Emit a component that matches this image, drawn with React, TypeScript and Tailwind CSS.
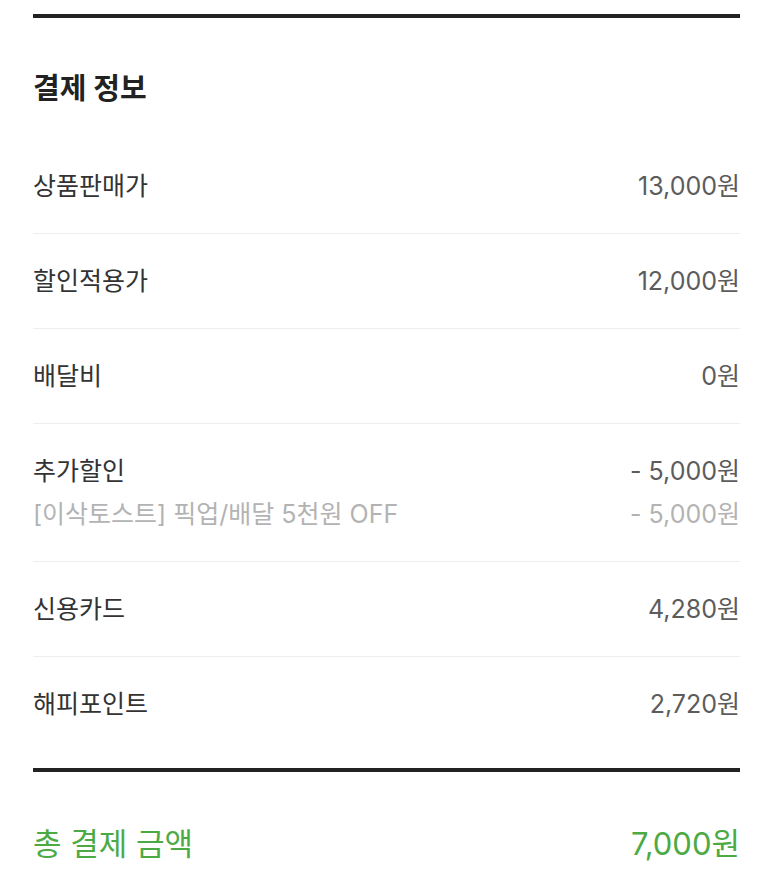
import React from 'react';

type Row = { label: string; value: string; sub?: { label: string; value: string } };

const rows: Row[] = [
  { label: '상품판매가', value: '13,000원' },
  { label: '할인적용가', value: '12,000원' },
  { label: '배달비', value: '0원' },
  {
    label: '추가할인',
    value: '- 5,000원',
    sub: { label: '[이삭토스트] 픽업/배달 5천원 OFF', value: '- 5,000원' },
  },
  { label: '신용카드', value: '4,280원' },
  { label: '해피포인트', value: '2,720원' },
];

const App: React.FC = () => {
  return (
    <div
      className="min-h-[895px] bg-white px-[33px]"
      style={{ fontFamily: 'Inter, "Noto Sans CJK KR", sans-serif' }}
    >
      <div className="h-[14px]" />
      <div className="h-[4px] bg-[#222222]" />

      <h2 className="pt-[51px] pb-[30px] text-[29px] font-bold leading-[40px] text-[#222222]">결제 정보</h2>

      <ul>
        {rows.map((row, i) => (
          <li
            key={row.label}
            className={`py-[33px] ${i < rows.length - 1 ? 'border-b border-[#eeeeee]' : ''}`}
          >
            <div className="flex items-center justify-between text-[25px] leading-[28px]">
              <span className="text-[#333333]">{row.label}</span>
              <span className="text-[#5c5c5c]">{row.value}</span>
            </div>
            {row.sub && (
              <div className="mt-[15px] flex items-center justify-between text-[25px] leading-[28px] text-[#b3b3b3]">
                <span>{row.sub.label}</span>
                <span>{row.sub.value}</span>
              </div>
            )}
          </li>
        ))}
      </ul>

      <div className="mt-[17px] h-[4px] bg-[#222222]" />

      <div className="flex items-center justify-between pt-[52px] text-[31px] leading-[40px] text-[#4caa45]">
        <span>총 결제 금액</span>
        <span>7,000원</span>
      </div>
    </div>
  );
};

export default App;
